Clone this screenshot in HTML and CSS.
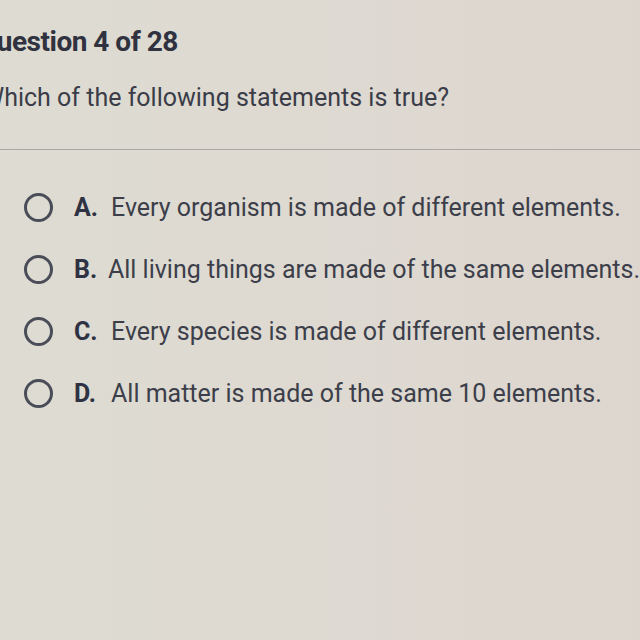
FILE: index.html
```html
<!DOCTYPE html>
<html>
<head>
<meta charset="utf-8">
<link rel="stylesheet" href="styles.css">
</head>
<body>
<div class="page">
  <header class="head">
    <h1 class="title">Question 4 of 28</h1>
    <p class="prompt">Which of the following statements is true?</p>
  </header>
  <ul class="options">
    <li class="option"><span class="radio"></span><span class="letter">A.</span><span class="text">Every organism is made of different elements.</span></li>
    <li class="option"><span class="radio"></span><span class="letter">B.</span><span class="text">All living things are made of the same elements.</span></li>
    <li class="option"><span class="radio"></span><span class="letter">C.</span><span class="text">Every species is made of different elements.</span></li>
    <li class="option"><span class="radio"></span><span class="letter">D.</span><span class="text">All matter is made of the same 10 elements.</span></li>
  </ul>
</div>
</body>
</html>
```
FILE: styles.css
```css
html, body {
  margin: 0;
  padding: 0;
  width: 640px;
  height: 640px;
  overflow: hidden;
}
body {
  background: linear-gradient(90deg, #dddbd2 0%, #dedad2 40%, #ddd6cf 100%);
  font-family: Roboto, "Liberation Sans", sans-serif;
  color: #3b3e49;
}
.page {
  display: flex;
  flex-direction: column;
}
.head {
  margin-left: -22px;
  padding-top: 24px;
  padding-bottom: 35px;
  border-bottom: 1.5px solid #a9a7a6;
}
.title {
  margin: 0;
  font-size: 28px;
  font-weight: 700;
  letter-spacing: -0.5px;
  color: #30323f;
  line-height: 36px;
}
.prompt {
  margin: 22px 0 0 0;
  font-size: 25px;
  line-height: 32px;
  color: #3a3d48;
  padding-left: 4px;
}
.options {
  list-style: none;
  margin: 0;
  padding: 41px 0 0 24px;
  display: flex;
  flex-direction: column;
  gap: 30px;
}
.option {
  display: flex;
  align-items: center;
  height: 32px;
  font-size: 25px;
}
.radio {
  width: 29px;
  height: 29px;
  border: 3px solid #4a4d58;
  border-radius: 50%;
  box-sizing: border-box;
  flex: none;
}
.letter {
  font-weight: 700;
  margin-left: 21px;
  width: 37px;
  color: #2f3242;
}
.text {
  white-space: nowrap;
  color: #3c3f4a;
}
```
